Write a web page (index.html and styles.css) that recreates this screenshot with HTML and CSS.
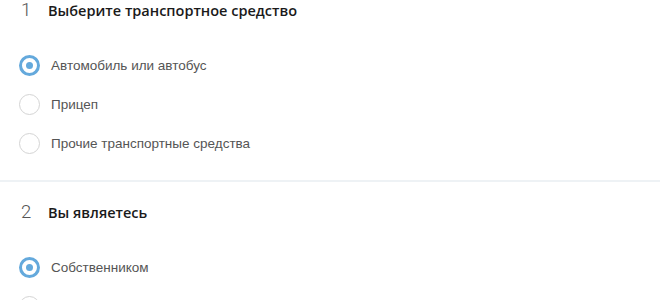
FILE: index.html
```html
<!DOCTYPE html>
<html lang="ru">
<head>
<meta charset="utf-8">
<link rel="stylesheet" href="styles.css">
</head>
<body>
<form class="form">
  <section class="section section-first">
    <div class="head"><span class="num">1</span><span class="title">Выберите транспортное средство</span></div>
    <div class="options">
      <label class="option"><span class="radio checked"></span><span class="label">Автомобиль или автобус</span></label>
      <label class="option"><span class="radio"></span><span class="label">Прицеп</span></label>
      <label class="option"><span class="radio"></span><span class="label">Прочие транспортные средства</span></label>
    </div>
  </section>
  <section class="section section-second">
    <div class="head"><span class="num">2</span><span class="title">Вы являетесь</span></div>
    <div class="options">
      <label class="option"><span class="radio checked"></span><span class="label">Собственником</span></label>
      <label class="option"><span class="radio"></span></label>
    </div>
  </section>
</form>
</body>
</html>
```
FILE: styles.css
```css
html, body {
  margin: 0;
  padding: 0;
  background: #ffffff;
  overflow: hidden;
}
.form {
  width: 660px;
}
.section {
  padding-left: 19px;
}
.section-first {
  padding-top: 0;
  padding-bottom: 17px;
  border-bottom: 2px solid #eef2f5;
}
.section-second {
  padding-top: 20px;
}
.head {
  display: flex;
  align-items: baseline;
  height: 20px;
  line-height: 20px;
}
.num {
  width: 29px;
  padding-left: 2px;
  box-sizing: border-box;
  font-family: Roboto, sans-serif;
  font-weight: 300;
  font-size: 18.5px;
  color: #555555;
}
.title {
  font-family: "Open Sans", sans-serif;
  font-weight: 600;
  font-size: 14.5px;
  color: #1a1a1a;
}
.options {
  margin-top: 26px;
  display: flex;
  flex-direction: column;
}
.option {
  display: flex;
  align-items: center;
  height: 39px;
}
.radio {
  width: 21px;
  height: 21px;
  box-sizing: border-box;
  border: 1px solid #d4d4d4;
  border-radius: 50%;
  display: flex;
  align-items: center;
  justify-content: center;
  flex-shrink: 0;
}
.radio.checked {
  border: 3px solid #64a9dc;
}
.radio.checked::after {
  content: "";
  width: 7px;
  height: 7px;
  border-radius: 50%;
  background: #64a9dc;
}
.label {
  margin-left: 11px;
  font-family: "Liberation Sans", Arial, sans-serif;
  font-size: 13.5px;
  color: #555555;
}
```
